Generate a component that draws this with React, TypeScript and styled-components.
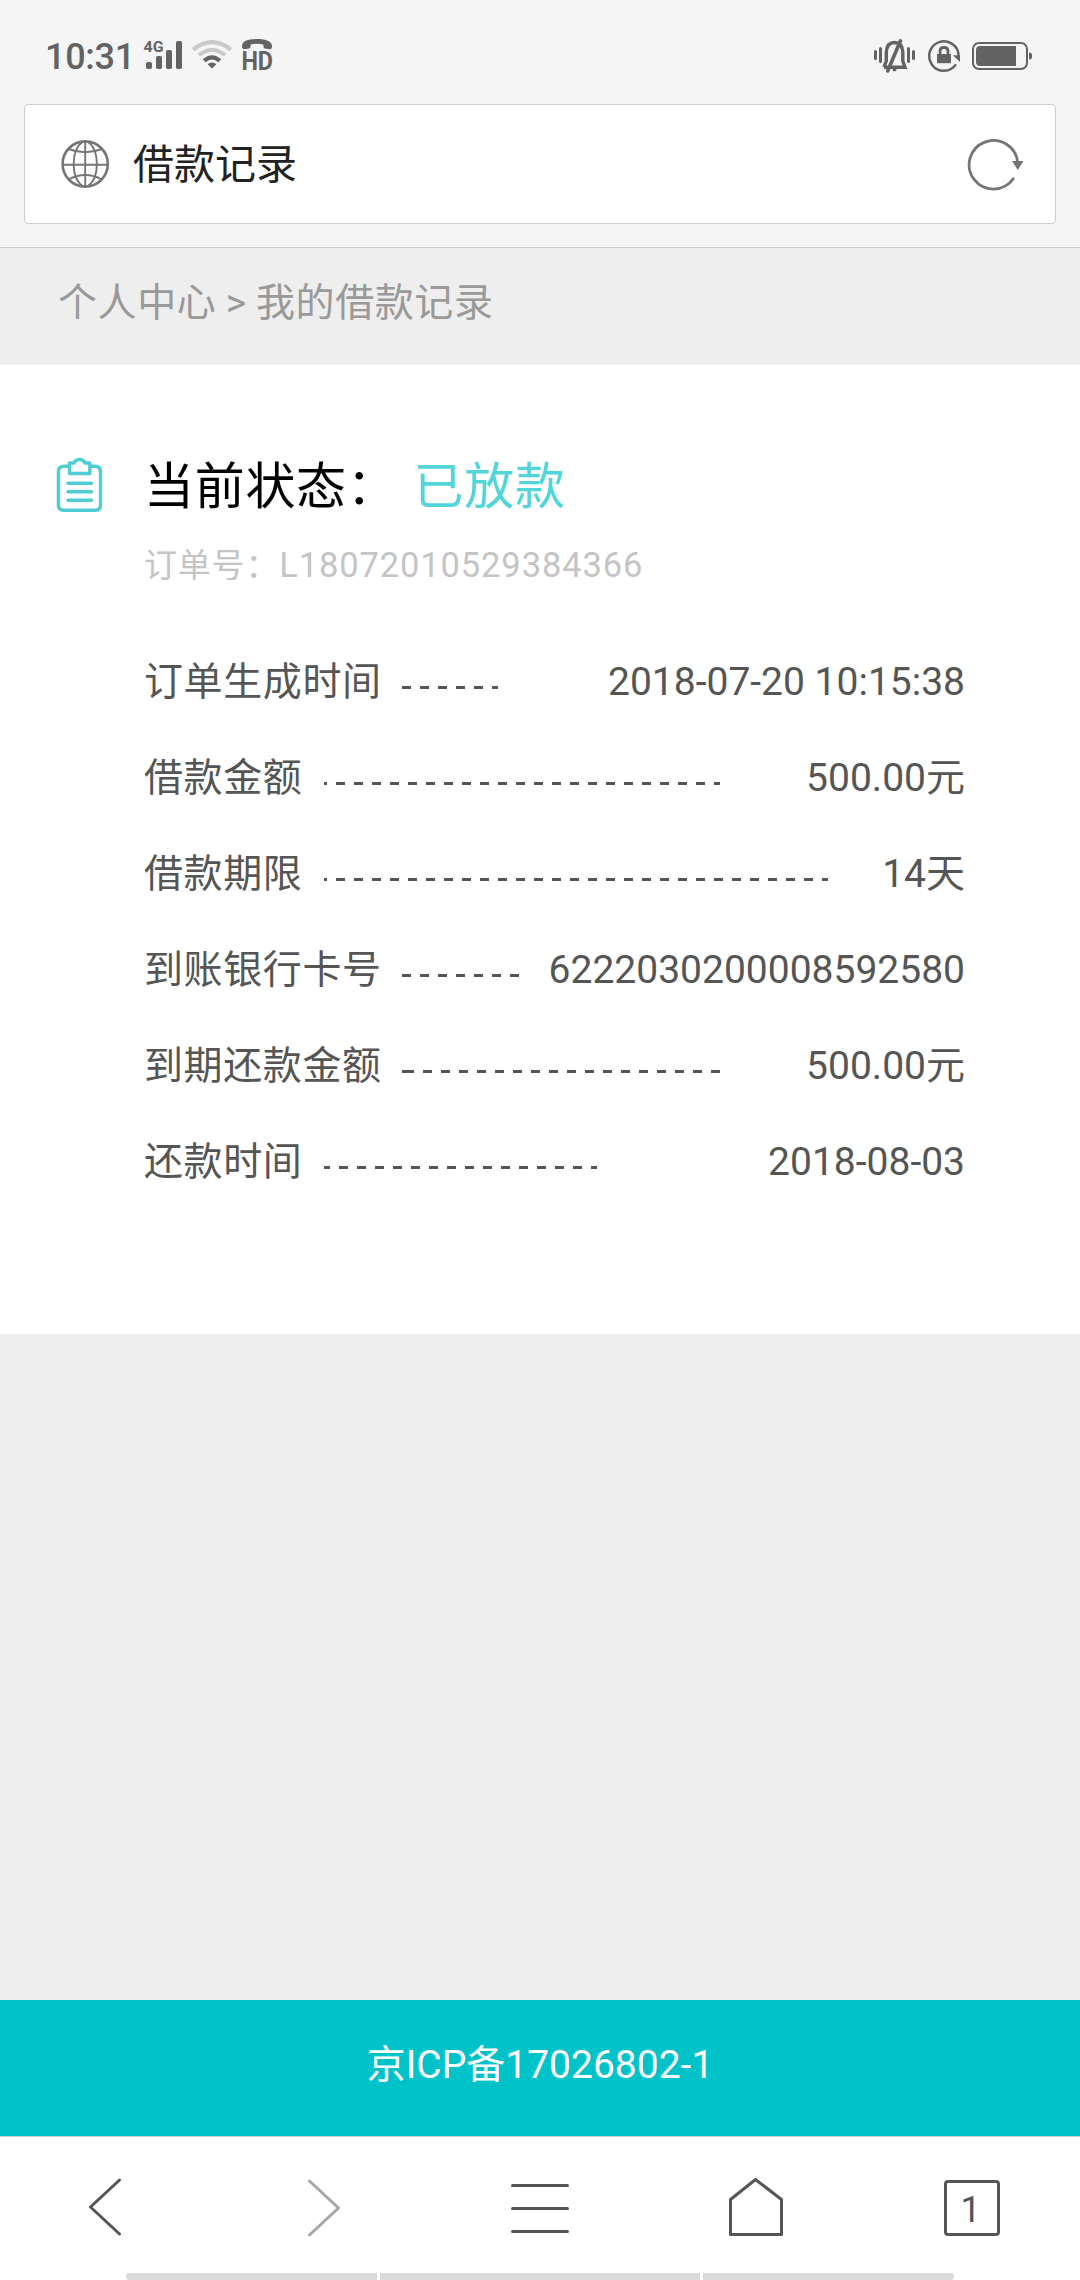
import React from "react";
import styled, { createGlobalStyle } from "styled-components";

const GlobalStyle = createGlobalStyle`
  html, body { margin: 0; padding: 0; background: #eeeeee; }
  * { box-sizing: border-box; }
  svg { display: block; flex: none; }
`;

const Screen = styled.div`
  width: 1080px;
  height: 2280px;
  display: flex;
  flex-direction: column;
  overflow: hidden;
  background: #eeeeee;
  font-family: Roboto, "Noto Sans CJK SC", sans-serif;
  white-space: nowrap;
`;

const BrowserHeader = styled.header`
  height: 248px;
  flex: none;
  background: #f5f5f5;
  border-bottom: 1px solid #cbcbcb;
`;

const StatusBar = styled.div`
  height: 104px;
  display: flex;
  justify-content: space-between;
  align-items: flex-start;
  padding: 38px 48px 0 45px;
`;

const StatusGroup = styled.div<{ $gap: number }>`
  display: flex;
  align-items: flex-start;
  gap: ${(p) => p.$gap}px;
`;

const Clock = styled.span`
  width: 90px;
  font-size: 36px;
  line-height: 38px;
  letter-spacing: -0.3px;
  font-weight: 500;
  color: #636363;
`;

const AddressBar = styled.div`
  height: 120px;
  margin: 0 24px;
  padding: 0 30px 0 35px;
  display: flex;
  align-items: center;
  background: #fff;
  border: 1px solid #cdcdcd;
  border-radius: 4px;
`;

const PageTitle = styled.span`
  margin-left: 23px;
  padding-top: 2px;
  flex: 1;
  font-size: 41px;
  line-height: 60px;
  color: #222;
`;

const Breadcrumb = styled.nav`
  height: 117px;
  flex: none;
  padding: 26px 0 0 58px;
  font-size: 39px;
  line-height: 58px;
  letter-spacing: 0.6px;
  word-spacing: -1px;
  color: #999;
`;

const Card = styled.main`
  height: 969px;
  flex: none;
  background: #fff;
  padding: 91px 115px 0 56px;
`;

const CardHead = styled.div`
  display: flex;
  align-items: flex-start;
`;

const HeadText = styled.div`
  margin-left: 40px;
`;

const StatusLine = styled.h1`
  margin: 0;
  display: flex;
  gap: 16px;
  font-size: 50px;
  line-height: 62px;
  font-weight: 400;
  letter-spacing: 0.7px;
  color: #000;
`;

const StatusValue = styled.span`
  color: #50d5db;
`;

const OrderNumber = styled.div`
  margin-top: 23px;
  font-size: 33px;
  line-height: 48px;
  letter-spacing: 0.8px;
  color: #c4c4c4;
`;

const OrderCode = styled.span`
  font-size: 34.5px;
  letter-spacing: 0.88px;
`;

const Details = styled.dl`
  margin: 44px 0 0 88px;
`;

const DetailRow = styled.div`
  height: 96px;
  display: flex;
  align-items: center;
  font-size: 39px;
  line-height: 58px;
  color: #555;
`;

const Label = styled.dt<{ $chars: number }>`
  width: ${(p) => p.$chars * 39 + 24}px;
  flex: none;
  letter-spacing: 0.6px;
`;

const Leader = styled.i<{ $width: number; $phase: number; $lead: number }>`
  width: ${(p) => p.$width}px;
  height: 3px;
  margin-top: 11px;
  border-left: ${(p) => p.$lead}px solid #555;
  background-image: linear-gradient(90deg, #555 50%, transparent 50%);
  background-size: 18px 3px;
  background-position: ${(p) => p.$phase}px 0;
`;

const Value = styled.dd`
  margin: 0 0 0 auto;
`;

const Footer = styled.footer`
  height: 136px;
  flex: none;
  margin-top: auto;
  padding-top: 36px;
  text-align: center;
  font-size: 39px;
  line-height: 58px;
  color: #fff;
  background: #00c2c9;
`;

const Toolbar = styled.nav`
  height: 137px;
  flex: none;
  display: grid;
  grid-template-columns: repeat(5, 1fr);
  justify-items: center;
  padding-top: 41px;
  background: #fff;
  border-top: 1px solid #ccc;
`;

const GestureBar = styled.div`
  height: 7px;
  flex: none;
  display: grid;
  grid-template-columns: 251px 320px 251px;
  gap: 3px;
  padding: 0 126px;
  background: #fff;
`;

const GestureSegment = styled.span<{ $side?: "left" | "right" }>`
  background: #d9d9d9;
  border-radius: ${(p) =>
    p.$side === "left" ? "4px 0 0 4px" : p.$side === "right" ? "0 4px 4px 0" : "0"};
`;

const INK = "#636363";

const Signal = () => (
  <svg width="40" height="34" viewBox="143 38 40 34" fill={INK}>
    <text x="143.6" y="52" fontSize="15" fontWeight="700" textLength="20" lengthAdjust="spacingAndGlyphs">4G</text>
    <rect x="146" y="62" width="6" height="7" rx="2" />
    <rect x="156" y="56" width="6" height="13" rx="1.8" />
    <rect x="166" y="50" width="6" height="19" rx="1.8" />
    <rect x="176" y="41" width="6" height="28" rx="1.8" />
  </svg>
);

const Wifi = () => (
  <svg width="42" height="34" viewBox="191 38 42 34" fill="none" strokeWidth="4">
    <path d="M193.2 49.6Q212 34.6 230.8 49.6" stroke="#c9c9c9" />
    <path d="M198.8 55.2Q212 44.8 225.2 55.2" stroke="#c9c9c9" />
    <path d="M204.2 60.8Q212 54 219.8 60.8" stroke={INK} />
    <path d="M207.6 64.2Q212 60.8 216.4 64.2L212 68.4Z" fill={INK} />
  </svg>
);

const HdCall = () => (
  <svg width="36" height="42" viewBox="241 38 36 42" fill={INK}>
    <path d="M242 46.5C242 41 248 39 257 39S272 41 272 46.5Q272 49.5 269 49.3L265 48.6Q263.5 48.3 263.5 46.5L263.2 44.5Q257 43.2 250.8 44.5L250.5 46.5Q250.5 48.3 249 48.6L245 49.3Q242 49.5 242 46.5Z" />
    <text x="241.4" y="70" fontSize="26" fontWeight="700" textLength="31.6" lengthAdjust="spacingAndGlyphs">HD</text>
  </svg>
);

const MutedBell = () => (
  <svg width="42" height="36" viewBox="874 37 42 36" fill="none" stroke={INK} strokeWidth="3" strokeLinecap="round">
    <path d="M875.5 50.5V57.5M880.5 47.5V60.5M908.5 47.5V60.5M913.5 50.5V57.5" />
    <path d="M884 66.2H905L902.8 60V51Q902 41.5 894.5 41.5T886.3 51V60L884 66.2" strokeWidth="3.4" strokeLinecap="butt" />
    <path d="M900.5 39.8L887.7 70" strokeWidth="3.6" />
    <path d="M894 68.8H895" />
  </svg>
);

const RotationLock = () => (
  <svg width="34" height="36" viewBox="926 37 34 36" fill="none" stroke={INK}>
    <path d="M957.6 55A14.7 14.7 0 1 0 955 63.4" strokeWidth="2.5" />
    <path d="M952 54.2H959V61Z" fill={INK} stroke="none" />
    <rect x="936" y="53" width="14" height="9.2" fill={INK} stroke="none" />
    <path d="M939 54V50Q939 46.5 943 46.5T947 50V54" strokeWidth="2.8" />
  </svg>
);

const Battery = () => (
  <svg width="60" height="36" viewBox="972 37 60 36" fill={INK}>
    <rect x="973" y="42" width="54" height="26" rx="6" fill="none" stroke={INK} strokeWidth="2" />
    <path d="M1016 45V65H980Q976 65 976 61V49Q976 45 980 45Z" />
    <path d="M1029 51.5Q1032 51.5 1032 54V56Q1032 58.5 1029 58.5Z" />
  </svg>
);

const Globe = () => (
  <svg width="50" height="50" viewBox="60 139 50 50" fill="none" stroke="#757575" strokeWidth="1.9">
    <circle cx="85.2" cy="164" r="22.6" strokeWidth="2.6" />
    <path d="M85.2 141.5V186.5M62.5 164.7H108" />
    <path d="M83 141.5C70.5 150 70.5 178 83 186.5M87.5 141.5C100 150 100 178 87.5 186.5" />
    <path d="M68.5 149Q85.2 155.5 102 149M68.5 179.5Q85.2 170.5 102 179.5" />
  </svg>
);

const Refresh = () => (
  <svg width="58" height="54" viewBox="967 137 58 54" fill="none" stroke="#757575" strokeWidth="2.8">
    <path d="M1017.7 163A24.3 24.3 0 1 0 1013.3 178.8" strokeLinecap="round" />
    <path d="M1012 161H1023.5L1017.8 170Z" fill="#757575" stroke="none" />
  </svg>
);

const Clipboard = () => (
  <svg width="48" height="58" viewBox="56 456 48 58" fill="none" stroke="#4fcdd4" strokeWidth="3.4">
    <path d="M69 466.3H64Q58.4 466.3 58.4 472V505Q58.4 510.3 64 510.3H95Q100.5 510.3 100.5 505V472Q100.5 466.3 95 466.3H90" />
    <path d="M69.5 463H74Q75.5 459.5 79.5 459.5T85 463H89.8V473.5H69.5Z" strokeLinejoin="round" />
    <path d="M68 483.3H91.5M68 491.7H91.5M68 500.2H91.5" strokeLinecap="round" />
  </svg>
);

const NavIcon = ({ d, color = "#555" }: { d: string; color?: string }) => (
  <svg width="60" height="60" viewBox="0 0 60 60" fill="none" stroke={color} strokeWidth="3" strokeLinecap="round" strokeLinejoin="round">
    <path d={d} />
  </svg>
);

const TabsIcon = () => (
  <svg width="60" height="60" viewBox="0 0 60 60">
    <rect x="3.5" y="3.5" width="53" height="53" rx="2.5" fill="none" stroke="#555" strokeWidth="3" />
    <text x="28.6" y="44" fontSize="36" fill="#555" textAnchor="middle">1</text>
  </svg>
);

const rows = [
  { label: "订单生成时间", value: "2018-07-20 10:15:38", width: 96, phase: 0, lead: 0 },
  { label: "借款金额", value: "500.00元", width: 396, phase: -6, lead: 0 },
  { label: "借款期限", value: "14天", width: 504, phase: -6, lead: 0 },
  { label: "到账银行卡号", value: "6222030200008592580", width: 117, phase: 0, lead: 0 },
  { label: "到期还款金额", value: "500.00元", width: 318, phase: 0, lead: 3 },
  { label: "还款时间", value: "2018-08-03", width: 273, phase: -3, lead: 0 },
];

export default function App() {
  return (
    <Screen>
      <GlobalStyle />
      <BrowserHeader>
        <StatusBar>
          <StatusGroup $gap={8}>
            <Clock>10:31</Clock>
            <Signal />
            <Wifi />
            <HdCall />
          </StatusGroup>
          <StatusGroup $gap={11}>
            <MutedBell />
            <RotationLock />
            <Battery />
          </StatusGroup>
        </StatusBar>
        <AddressBar>
          <Globe />
          <PageTitle>借款记录</PageTitle>
          <Refresh />
        </AddressBar>
      </BrowserHeader>
      <Breadcrumb>个人中心 &gt; 我的借款记录</Breadcrumb>
      <Card>
        <CardHead>
          <Clipboard />
          <HeadText>
            <StatusLine>
              当前状态：<StatusValue>已放款</StatusValue>
            </StatusLine>
            <OrderNumber>
              订单号：<OrderCode>L18072010529384366</OrderCode>
            </OrderNumber>
          </HeadText>
        </CardHead>
        <Details>
          {rows.map((r) => (
            <DetailRow key={r.label}>
              <Label $chars={r.label.length}>{r.label}</Label>
              <Leader $width={r.width} $phase={r.phase} $lead={r.lead} />
              <Value>{r.value}</Value>
            </DetailRow>
          ))}
        </Details>
      </Card>
      <Footer>京ICP备17026802-1</Footer>
      <Toolbar>
        <NavIcon d="M41.5 2L12.5 29L41.5 56" />
        <NavIcon color="#a6a6a6" d="M15.5 3L44.5 30L15.5 57" />
        <NavIcon d="M2.5 7.5H57.5M2.5 30.5H57.5M2.5 53.5H57.5" />
        <NavIcon d="M4.5 21.5L29.5 1.5L55.5 21.5V56.5H4.5Z" />
        <TabsIcon />
      </Toolbar>
      <GestureBar>
        <GestureSegment $side="left" />
        <GestureSegment />
        <GestureSegment $side="right" />
      </GestureBar>
    </Screen>
  );
}
